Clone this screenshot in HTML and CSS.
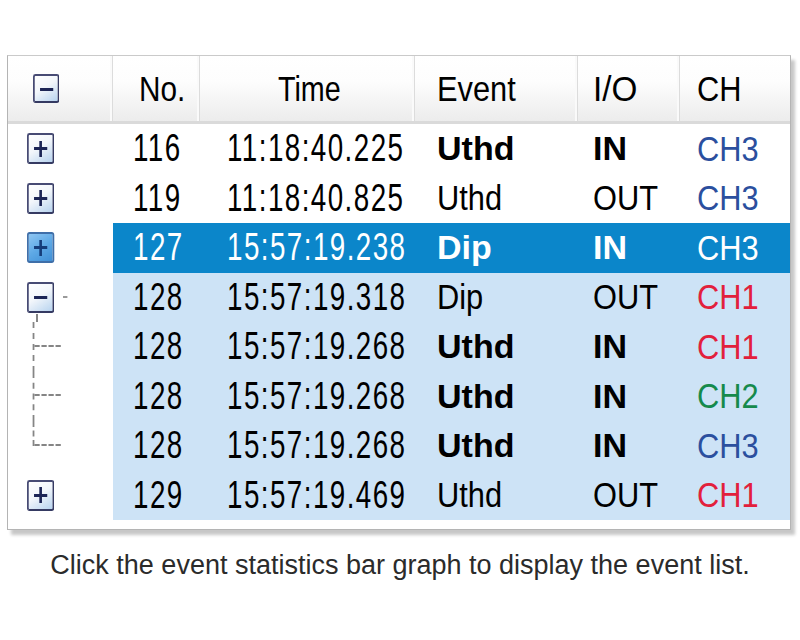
FILE: index.html
```html
<!DOCTYPE html>
<html lang="en">
<head>
    <meta charset="UTF-8">
    <title>Event List</title>
    <link rel="stylesheet" href="styles.css">
</head>
<body>

<div class="frame">
    <div class="row head">
        <div class="cell icon"><span class="box minus head-box"></span></div>
        <div class="cell c-no"><span>No.</span></div>
        <div class="cell c-time"><span>Time</span></div>
        <div class="cell c-event"><span>Event</span></div>
        <div class="cell c-io"><span>I/O</span></div>
        <div class="cell c-ch"><span>CH</span></div>
    </div>

    <div class="row">
        <div class="cell icon"><span class="box plus"></span></div>
        <div class="cell c-no num"><span>116</span></div>
        <div class="cell c-time num"><span>11:18:40.225</span></div>
        <div class="cell c-event b"><span>Uthd</span></div>
        <div class="cell c-io b"><span>IN</span></div>
        <div class="cell c-ch ch3"><span>CH3</span></div>
    </div>
    <div class="row">
        <div class="cell icon"><span class="box plus"></span></div>
        <div class="cell c-no num"><span>119</span></div>
        <div class="cell c-time num"><span>11:18:40.825</span></div>
        <div class="cell c-event"><span>Uthd</span></div>
        <div class="cell c-io"><span>OUT</span></div>
        <div class="cell c-ch ch3"><span>CH3</span></div>
    </div>
    <div class="row sel">
        <div class="cell icon"><span class="box plus active"></span></div>
        <div class="cell c-no num"><span>127</span></div>
        <div class="cell c-time num"><span>15:57:19.238</span></div>
        <div class="cell c-event b"><span>Dip</span></div>
        <div class="cell c-io b"><span>IN</span></div>
        <div class="cell c-ch"><span>CH3</span></div>
    </div>
    <div class="row lit">
        <div class="cell icon parent"><span class="box minus"></span><span class="stub"></span></div>
        <div class="cell c-no num"><span>128</span></div>
        <div class="cell c-time num"><span>15:57:19.318</span></div>
        <div class="cell c-event"><span>Dip</span></div>
        <div class="cell c-io"><span>OUT</span></div>
        <div class="cell c-ch ch1"><span>CH1</span></div>
    </div>
    <div class="row lit">
        <div class="cell icon"><span class="branch"></span></div>
        <div class="cell c-no num"><span>128</span></div>
        <div class="cell c-time num"><span>15:57:19.268</span></div>
        <div class="cell c-event b"><span>Uthd</span></div>
        <div class="cell c-io b"><span>IN</span></div>
        <div class="cell c-ch ch1"><span>CH1</span></div>
    </div>
    <div class="row lit">
        <div class="cell icon"><span class="branch"></span></div>
        <div class="cell c-no num"><span>128</span></div>
        <div class="cell c-time num"><span>15:57:19.268</span></div>
        <div class="cell c-event b"><span>Uthd</span></div>
        <div class="cell c-io b"><span>IN</span></div>
        <div class="cell c-ch ch2"><span>CH2</span></div>
    </div>
    <div class="row lit">
        <div class="cell icon"><span class="branch last"></span></div>
        <div class="cell c-no num"><span>128</span></div>
        <div class="cell c-time num"><span>15:57:19.268</span></div>
        <div class="cell c-event b"><span>Uthd</span></div>
        <div class="cell c-io b"><span>IN</span></div>
        <div class="cell c-ch ch3"><span>CH3</span></div>
    </div>
    <div class="row lit">
        <div class="cell icon"><span class="box plus"></span></div>
        <div class="cell c-no num"><span>129</span></div>
        <div class="cell c-time num"><span>15:57:19.469</span></div>
        <div class="cell c-event"><span>Uthd</span></div>
        <div class="cell c-io"><span>OUT</span></div>
        <div class="cell c-ch ch1"><span>CH1</span></div>
    </div>
</div>

<p class="caption">Click the event statistics bar graph to display the event list.</p>

</body>
</html>
```

FILE: styles.css
```css
body {
    margin: 0;
    background: white;
    font-family: 'Liberation Sans', Arial, sans-serif;
}
.frame {
    width: 784px;
    box-sizing: border-box;
    margin: 55px 0 0 7px;
    padding-bottom: 9px;
    background: white;
    border: 1px solid #b4b4b4;
    border-top-color: #cacaca;
    box-shadow: 4px 5px 3px rgba(0, 0, 0, 0.22);
}
.row {
    display: grid;
    grid-template-columns: 105px 87px 215px 163px 102px 110px;
    height: 49.5px;
    font-size: 35px;
    color: #000;
}
.cell {
    display: flex;
    align-items: center;
    white-space: nowrap;
}
/* the list font is a tall, narrow one: squeeze Liberation Sans */
.cell span {
    display: inline-block;
    transform: scaleX(0.88);
    transform-origin: 0 50%;
}
.num span {
    font-size: 38px;
    letter-spacing: 2px;
    transform: scaleX(0.73);
}
.b span {
    font-size: 34px;
    font-weight: bold;
    transform: none;
}
.c-no { padding-left: 20px; }
.c-time { padding-left: 27px; }
.c-event { padding-left: 22px; }
.c-io { padding-left: 15px; }
.c-ch { padding-left: 17px; }

.ch1 { color: #e2203c; }
.ch2 { color: #158a4c; }
.ch3 { color: #2b4f9e; }

/* header */
.head {
    height: 65px;
    border-bottom: 3px solid #dadada;
    background: linear-gradient(#ffffff 0%, #fdfdfd 40%, #ececec 100%);
}
.head .cell {
    border-right: 1px solid #dcdcdc;
    box-shadow: inset -2px 0 0 #fafafa;
}
.head .cell:last-child {
    border-right: none;
    box-shadow: none;
}
.head .c-no span { transform: scaleX(0.85); }
.head .c-no { padding-left: 26px; }
.head .c-time span { transform: scaleX(0.82); }
.head .c-time { padding-left: 78px; }
.head .c-io span { transform: scaleX(0.95); }

/* highlighted rows */
.lit .cell:not(.icon) { background: #cde3f6; }
.sel .cell:not(.icon) {
    background: #0b86ca;
    color: white;
}

/* expand / collapse boxes */
.box {
    position: relative;
    display: block;
    width: 31px;
    height: 31px;
    box-sizing: border-box;
    margin-left: 19px;
    border: 2px solid #474b74;
    border-right-color: #353a62;
    border-bottom-color: #353a62;
    border-radius: 3px;
    background: linear-gradient(150deg, #ffffff 0%, #f2f6fb 45%, #b7d3ef 100%);
}
.head-box {
    margin-left: 25px;
    width: 30px;
    height: 29px;
}
.box::before,
.box::after {
    content: "";
    position: absolute;
    background: #1c2556;
}
.box::before {
    left: 6px;
    top: 12px;
    width: 15px;
    height: 3px;
}
.plus::after {
    left: 12px;
    top: 5.5px;
    width: 3px;
    height: 16px;
}
.box.active {
    border-color: #3f6fa9;
    background: linear-gradient(150deg, #8fc6f2 0%, #5ea9e6 50%, #3f8fd6 100%);
}
.box.active::before,
.box.active::after { background: #153d7a; }

/* tree connectors */
.parent {
    position: relative;
}
.parent::after {
    content: "";
    position: absolute;
    left: 28px;
    top: 41px;
    bottom: 0;
    border-left: 2px dashed #858585;
}
.stub {
    width: 5px;
    height: 2px;
    margin-left: 5px;
    background: #9a9a9a;
}
.branch {
    position: relative;
    display: block;
    width: 105px;
    height: 100%;
}
.branch::before {
    content: "";
    position: absolute;
    left: 28px;
    top: 0;
    bottom: 0;
    border-left: 2px dashed #858585;
}
.branch.last::before {
    bottom: 50%;
}
.branch::after {
    content: "";
    position: absolute;
    left: 30px;
    top: calc(50% - 2px);
    width: 30px;
    border-top: 2px dashed #858585;
}

.caption {
    margin: 20px 0 0;
    text-align: center;
    font-size: 27px;
    color: #2b2b2b;
}
```
